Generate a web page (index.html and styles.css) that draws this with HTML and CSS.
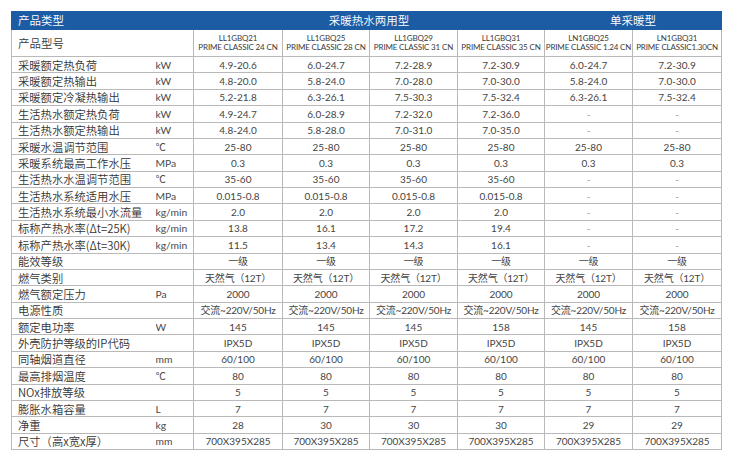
FILE: index.html
```html
<!DOCTYPE html>
<html lang="zh-CN">
<head>
<meta charset="utf-8">
<title>产品参数</title>
<link rel="stylesheet" href="styles.css">
</head>
<body>
<table class="spec">
  <colgroup>
    <col class="c-label"><col class="c-unit">
    <col class="c-d1"><col class="c-d2"><col class="c-d3"><col class="c-d4"><col class="c-d5"><col class="c-d6">
  </colgroup>
  <thead>
    <tr class="group">
      <th colspan="2" class="g-title">产品类型</th>
      <th colspan="4">采暖热水两用型</th>
      <th colspan="2">单采暖型</th>
    </tr>
    <tr class="models">
      <th colspan="2" class="m-title">产品型号</th>
      <th><span>LL1GBQ21</span><span>PRIME CLASSIC 24 CN</span></th>
      <th><span>LL1GBQ25</span><span>PRIME CLASSIC 28 CN</span></th>
      <th><span>LL1GBQ29</span><span>PRIME CLASSIC 31 CN</span></th>
      <th><span>LL1GBQ31</span><span>PRIME CLASSIC 35 CN</span></th>
      <th><span>LN1GBQ25</span><span>PRIME CLASSIC 1.24 CN</span></th>
      <th><span>LN1GBQ31</span><span>PRIME CLASSIC1.30CN</span></th>
    </tr>
  </thead>
  <tbody>
    <tr><td class="lab">采暖额定热负荷</td><td class="unit">kW</td><td>4.9-20.6</td><td>6.0-24.7</td><td>7.2-28.9</td><td>7.2-30.9</td><td>6.0-24.7</td><td>7.2-30.9</td></tr>
    <tr><td class="lab">采暖额定热输出</td><td class="unit">kW</td><td>4.8-20.0</td><td>5.8-24.0</td><td>7.0-28.0</td><td>7.0-30.0</td><td>5.8-24.0</td><td>7.0-30.0</td></tr>
    <tr><td class="lab">采暖额定冷凝热输出</td><td class="unit">kW</td><td>5.2-21.8</td><td>6.3-26.1</td><td>7.5-30.3</td><td>7.5-32.4</td><td>6.3-26.1</td><td>7.5-32.4</td></tr>
    <tr><td class="lab">生活热水额定热负荷</td><td class="unit">kW</td><td>4.9-24.7</td><td>6.0-28.9</td><td>7.2-32.0</td><td>7.2-36.0</td><td class="dash">-</td><td class="dash">-</td></tr>
    <tr><td class="lab">生活热水额定热输出</td><td class="unit">kW</td><td>4.8-24.0</td><td>5.8-28.0</td><td>7.0-31.0</td><td>7.0-35.0</td><td class="dash">-</td><td class="dash">-</td></tr>
    <tr><td class="lab">采暖水温调节范围</td><td class="unit">℃</td><td>25-80</td><td>25-80</td><td>25-80</td><td>25-80</td><td>25-80</td><td>25-80</td></tr>
    <tr><td class="lab">采暖系统最高工作水压</td><td class="unit">MPa</td><td>0.3</td><td>0.3</td><td>0.3</td><td>0.3</td><td>0.3</td><td>0.3</td></tr>
    <tr><td class="lab">生活热水水温调节范围</td><td class="unit">℃</td><td>35-60</td><td>35-60</td><td>35-60</td><td>35-60</td><td class="dash">-</td><td class="dash">-</td></tr>
    <tr><td class="lab">生活热水系统适用水压</td><td class="unit">MPa</td><td>0.015-0.8</td><td>0.015-0.8</td><td>0.015-0.8</td><td>0.015-0.8</td><td class="dash">-</td><td class="dash">-</td></tr>
    <tr><td class="lab">生活热水系统最小水流量</td><td class="unit">kg/min</td><td>2.0</td><td>2.0</td><td>2.0</td><td>2.0</td><td class="dash">-</td><td class="dash">-</td></tr>
    <tr><td class="lab">标称产热水率(Δt=25K)</td><td class="unit">kg/min</td><td>13.8</td><td>16.1</td><td>17.2</td><td>19.4</td><td class="dash">-</td><td class="dash">-</td></tr>
    <tr><td class="lab">标称产热水率(Δt=30K)</td><td class="unit">kg/min</td><td>11.5</td><td>13.4</td><td>14.3</td><td>16.1</td><td class="dash">-</td><td class="dash">-</td></tr>
    <tr><td class="lab">能效等级</td><td class="unit"></td><td class="cn">一级</td><td class="cn">一级</td><td class="cn">一级</td><td class="cn">一级</td><td class="cn">一级</td><td class="cn">一级</td></tr>
    <tr><td class="lab">燃气类别</td><td class="unit"></td><td class="cn">天然气（12T）</td><td class="cn">天然气（12T）</td><td class="cn">天然气（12T）</td><td class="cn">天然气（12T）</td><td class="cn">天然气（12T）</td><td class="cn">天然气（12T）</td></tr>
    <tr><td class="lab">燃气额定压力</td><td class="unit">Pa</td><td>2000</td><td>2000</td><td>2000</td><td>2000</td><td>2000</td><td>2000</td></tr>
    <tr><td class="lab">电源性质</td><td class="unit"></td><td class="cn">交流~220V/50Hz</td><td class="cn">交流~220V/50Hz</td><td class="cn">交流~220V/50Hz</td><td class="cn">交流~220V/50Hz</td><td class="cn">交流~220V/50Hz</td><td class="cn">交流~220V/50Hz</td></tr>
    <tr><td class="lab">额定电功率</td><td class="unit">W</td><td>145</td><td>145</td><td>145</td><td>158</td><td>145</td><td>158</td></tr>
    <tr><td class="lab">外壳防护等级的IP代码</td><td class="unit"></td><td>IPX5D</td><td>IPX5D</td><td>IPX5D</td><td>IPX5D</td><td>IPX5D</td><td>IPX5D</td></tr>
    <tr><td class="lab">同轴烟道直径</td><td class="unit">mm</td><td>60/100</td><td>60/100</td><td>60/100</td><td>60/100</td><td>60/100</td><td>60/100</td></tr>
    <tr><td class="lab">最高排烟温度</td><td class="unit">℃</td><td>80</td><td>80</td><td>80</td><td>80</td><td>80</td><td>80</td></tr>
    <tr><td class="lab">NOx排放等级</td><td class="unit"></td><td>5</td><td>5</td><td>5</td><td>5</td><td>5</td><td>5</td></tr>
    <tr><td class="lab">膨胀水箱容量</td><td class="unit">L</td><td>7</td><td>7</td><td>7</td><td>7</td><td>7</td><td>7</td></tr>
    <tr><td class="lab">净重</td><td class="unit">kg</td><td>28</td><td>30</td><td>30</td><td>30</td><td>29</td><td>29</td></tr>
    <tr><td class="lab">尺寸（高x宽x厚）</td><td class="unit">mm</td><td>700X395X285</td><td>700X395X285</td><td>700X395X285</td><td>700X395X285</td><td>700X395X285</td><td>700X395X285</td></tr>
  </tbody>
</table>
</body>
</html>
```
FILE: styles.css
```css
html, body {
  margin: 0;
  padding: 0;
  background: #ffffff;
}
body {
  padding: 11px 0 0 11px;
  font-family: Lato, "Noto Sans CJK SC", sans-serif;
}
.spec {
  border-collapse: collapse;
  table-layout: fixed;
  width: 711px;
  color: #3c3c3c;
}
.c-label { width: 144px; }
.c-unit { width: 38px; }
.c-d1 { width: 89px; }
.c-d2 { width: 87px; }
.c-d3 { width: 88px; }
.c-d4 { width: 87px; }
.c-d5 { width: 88px; }
.c-d6 { width: 89px; }

.spec td, .spec th {
  padding: 0;
  border: 1px solid #b9b9b9;
  text-align: center;
  vertical-align: middle;
  font-weight: 400;
  white-space: nowrap;
  overflow: hidden;
}
.group th {
  height: 17px;
  background: #1c5ca5;
  color: #ffffff;
  border-color: #1c5ca5;
  font-family: "Noto Sans CJK SC", sans-serif;
  font-weight: 350;
  font-size: 11.5px;
  line-height: 17px;
}
.group .g-title {
  text-align: left;
  padding-left: 6px;
}
.models th {
  height: 26px;
  font-size: 8px;
  line-height: 9.5px;
  color: #3a3a3a;
}
.models th span {
  display: block;
  letter-spacing: -0.15px;
}
.models .m-title {
  text-align: left;
  padding-left: 6px;
  font-family: "Noto Sans CJK SC", sans-serif;
  font-weight: 350;
  font-size: 11.5px;
  line-height: 14px;
}
.spec tbody tr {
  height: 16.375px;
}
.spec tbody td {
  font-size: 10px;
  line-height: 14px;
  color: #454545;
}
.spec tbody td.lab {
  text-align: left;
  padding-left: 6px;
  border-right: none;
  font-family: "Noto Sans CJK SC", sans-serif;
  font-weight: 350;
  font-size: 11.3px;
  color: #333333;
}
.spec tbody td.unit {
  text-align: left;
  border-left: none;
  font-size: 10.3px;
  color: #4a4a4a;
}
.spec tbody td.cn {
  font-family: Lato, "Noto Sans CJK SC", sans-serif;
  font-size: 10px;
  letter-spacing: -0.2px;
}
.spec tbody td.dash {
  color: #9a9a9a;
}
```
